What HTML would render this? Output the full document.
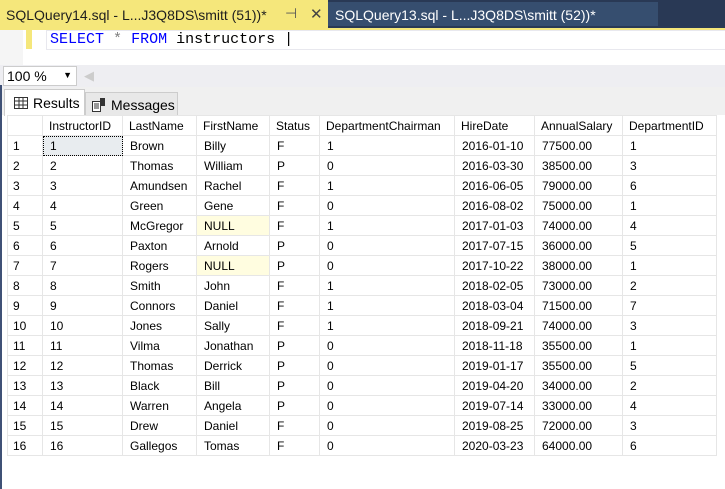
<!DOCTYPE html>
<html><head><meta charset="utf-8"><style>
*{margin:0;padding:0;box-sizing:border-box}
body{width:725px;height:489px;overflow:hidden;background:#fff;font-family:"Liberation Sans",sans-serif;position:relative}
.abs{position:absolute}
#tabbar{left:0;top:0;width:725px;height:29px;background:#293955}
#t1{left:0;top:0;width:328px;height:29px;background:#f5e77b;color:#1e1e1e;font-size:14px;padding:7px 0 0 6px;white-space:nowrap}
#t2{left:328px;top:2px;width:330px;height:24px;background:#364e6f;color:#fff;font-size:14px;padding:5px 0 0 7px;white-space:nowrap}
#yl{left:0;top:28px;width:725px;height:2px;background:#f5e77b}
#editor{left:0;top:30px;width:725px;height:35px;background:#fff}
#gut{left:0;top:30px;width:23px;height:35px;background:#f5f5f5}
#ybar{left:26px;top:30px;width:6px;height:19px;background:#f5e77b}
#line{left:46px;top:30px;width:679px;height:20px;border:1px solid #e8e8ee;border-right:none}
#code{left:50px;top:30px;font-family:"Liberation Mono",monospace;font-size:15px;line-height:19px;color:#000;white-space:pre}
.kw{color:#0000ff}.op{color:#808080}
#zoombar{left:0;top:65px;width:725px;height:22px;background:#eeeef2}
#zoom{left:3px;top:66px;width:74px;height:20px;background:#fff;border:1px solid #ccc;font-size:14px;padding:1px 0 0 3px}
#tabs{left:0;top:87px;width:725px;height:28px;background:#f0f0f0}
#lb{left:0;top:85px;width:2px;height:404px;background:#3f5176}
#rtab{left:4px;top:89px;width:81px;height:27px;background:#fff;border:1px solid #ccc;border-bottom:none;font-size:14px;padding:5px 0 0 28px}
#mtab{left:85px;top:92px;width:93px;height:23px;background:#e8e8e8;border:1px solid #ccc;border-bottom:none;font-size:14px;padding:4px 0 0 25px}
table{position:absolute;left:7px;top:115px;border-collapse:collapse;font-size:12px;color:#000}
td{height:20px;border:1px solid #e6e6e6;padding:1px 0 0 7px;white-space:nowrap;background:#fff}
tr.h td{padding-left:6px}
td:first-child{padding-left:5px}
td.n{background:#fffde0}
td.sel{background:#e8ecef;outline:1px dotted #000;outline-offset:-1px}
</style></head><body>
<div id="tabbar" class="abs"></div>
<div id="t1" class="abs">SQLQuery14.sql - L...J3Q8DS\smitt (51))*</div>
<div class="abs" style="left:285px;top:5px;color:#555;font-size:14px">⊣</div>
<div class="abs" style="left:310px;top:5px;color:#444;font-size:15px">✕</div>
<div id="t2" class="abs">SQLQuery13.sql - L...J3Q8DS\smitt (52))*</div>
<div id="yl" class="abs"></div>
<div id="editor" class="abs"></div>
<div id="gut" class="abs"></div>
<div id="ybar" class="abs"></div>
<div id="line" class="abs"></div>
<div id="code" class="abs"><span class="kw">SELECT</span> <span class="op">*</span> <span class="kw">FROM</span> instructors <span style="color:#000">|</span></div>
<div id="zoombar" class="abs"></div>
<div id="zoom" class="abs">100 %<span style="position:absolute;right:4px;top:3px;font-size:9px">▼</span></div>
<div class="abs" style="left:84px;top:68px;color:#ccc;font-size:13px">◀</div>
<div id="tabs" class="abs"></div>
<div id="lb" class="abs"></div>
<div id="rtab" class="abs"><svg style="position:absolute;left:9px;top:7px" width="14" height="12"><rect x="0.5" y="0.5" width="13" height="11" fill="none" stroke="#333"/><path d="M0 4h14M0 8h14M5 0v12M9 0v12" stroke="#333"/></svg>Results</div>
<div id="mtab" class="abs"><svg style="position:absolute;left:6px;top:5px" width="14" height="14"><rect x="0.5" y="3.5" width="8" height="10" fill="#fff" stroke="#333"/><path d="M2 6h5M2 8h5M2 10h5" stroke="#333"/><rect x="8" y="0" width="5" height="8" fill="#333"/></svg>Messages</div>
<table>
<colgroup><col style="width:35px"><col style="width:80px"><col style="width:74px"><col style="width:73px"><col style="width:50px"><col style="width:135px"><col style="width:80px"><col style="width:88px"><col style="width:94px"></colgroup>
<tr class="h"><td></td><td>InstructorID</td><td>LastName</td><td>FirstName</td><td>Status</td><td>DepartmentChairman</td><td>HireDate</td><td>AnnualSalary</td><td>DepartmentID</td></tr>
<tr><td>1</td><td class="sel">1</td><td>Brown</td><td>Billy</td><td>F</td><td>1</td><td>2016-01-10</td><td>77500.00</td><td>1</td></tr>
<tr><td>2</td><td>2</td><td>Thomas</td><td>William</td><td>P</td><td>0</td><td>2016-03-30</td><td>38500.00</td><td>3</td></tr>
<tr><td>3</td><td>3</td><td>Amundsen</td><td>Rachel</td><td>F</td><td>1</td><td>2016-06-05</td><td>79000.00</td><td>6</td></tr>
<tr><td>4</td><td>4</td><td>Green</td><td>Gene</td><td>F</td><td>0</td><td>2016-08-02</td><td>75000.00</td><td>1</td></tr>
<tr><td>5</td><td>5</td><td>McGregor</td><td class="n">NULL</td><td>F</td><td>1</td><td>2017-01-03</td><td>74000.00</td><td>4</td></tr>
<tr><td>6</td><td>6</td><td>Paxton</td><td>Arnold</td><td>P</td><td>0</td><td>2017-07-15</td><td>36000.00</td><td>5</td></tr>
<tr><td>7</td><td>7</td><td>Rogers</td><td class="n">NULL</td><td>P</td><td>0</td><td>2017-10-22</td><td>38000.00</td><td>1</td></tr>
<tr><td>8</td><td>8</td><td>Smith</td><td>John</td><td>F</td><td>1</td><td>2018-02-05</td><td>73000.00</td><td>2</td></tr>
<tr><td>9</td><td>9</td><td>Connors</td><td>Daniel</td><td>F</td><td>1</td><td>2018-03-04</td><td>71500.00</td><td>7</td></tr>
<tr><td>10</td><td>10</td><td>Jones</td><td>Sally</td><td>F</td><td>1</td><td>2018-09-21</td><td>74000.00</td><td>3</td></tr>
<tr><td>11</td><td>11</td><td>Vilma</td><td>Jonathan</td><td>P</td><td>0</td><td>2018-11-18</td><td>35500.00</td><td>1</td></tr>
<tr><td>12</td><td>12</td><td>Thomas</td><td>Derrick</td><td>P</td><td>0</td><td>2019-01-17</td><td>35500.00</td><td>5</td></tr>
<tr><td>13</td><td>13</td><td>Black</td><td>Bill</td><td>P</td><td>0</td><td>2019-04-20</td><td>34000.00</td><td>2</td></tr>
<tr><td>14</td><td>14</td><td>Warren</td><td>Angela</td><td>P</td><td>0</td><td>2019-07-14</td><td>33000.00</td><td>4</td></tr>
<tr><td>15</td><td>15</td><td>Drew</td><td>Daniel</td><td>F</td><td>0</td><td>2019-08-25</td><td>72000.00</td><td>3</td></tr>
<tr><td>16</td><td>16</td><td>Gallegos</td><td>Tomas</td><td>F</td><td>0</td><td>2020-03-23</td><td>64000.00</td><td>6</td></tr>
</table>
</body></html>
